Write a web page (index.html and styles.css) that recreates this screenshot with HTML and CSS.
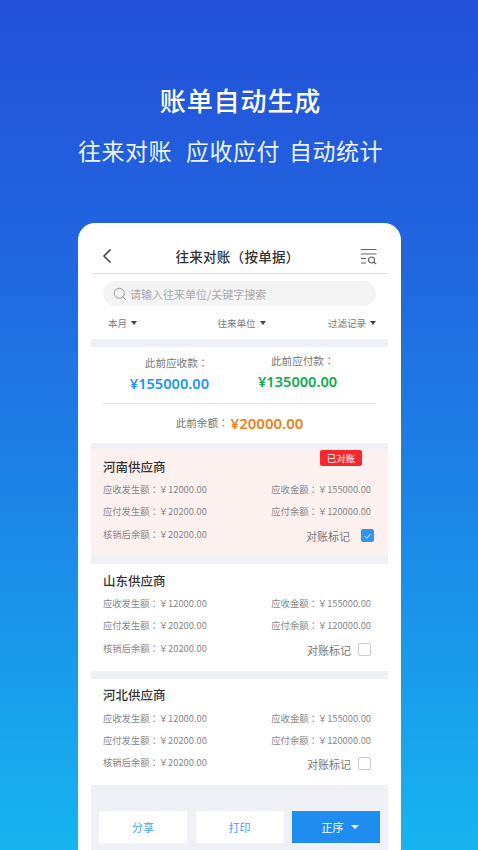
FILE: index.html
```html
<!DOCTYPE html>
<html lang="zh-CN">
<head>
<meta charset="utf-8">
<title>账单自动生成</title>
<link rel="stylesheet" href="styles.css">
</head>
<body>
<header class="hero">
  <h1 class="hero-title">账单自动生成</h1>
  <p class="hero-sub"><span>往来对账</span><span>应收应付</span><span class="hero-sub-last">自动统计</span></p>
</header>
<main class="phone">
  <div class="nav">
    <svg class="nav-back" viewBox="0 0 12 18" width="12" height="18"><path d="M9.5 2.5 3 9l6.500 6.500" fill="none" stroke="#444" stroke-width="1.600"/></svg>
    <div class="nav-title">往来对账（按单据）</div>
    <svg class="nav-filter" viewBox="0 0 18 18" width="18" height="18"><path d="M1 2.500h15.500M1 7h15.500M1 11.500h5M1 16h5" fill="none" stroke="#666" stroke-width="1.200"/><circle cx="11.500" cy="13" r="3" fill="none" stroke="#666" stroke-width="1.200"/><path d="m13.800 15.300 2.500 1.800" stroke="#666" stroke-width="1.200"/></svg>
  </div>
  <div class="search">
    <svg viewBox="0 0 14 14" width="14" height="14"><circle cx="6.300" cy="6.300" r="5" fill="none" stroke="#999" stroke-width="1"/><path d="m10 10 3 3" stroke="#999" stroke-width="1"/></svg>
    <span>请输入往来单位/关键字搜索</span>
  </div>
  <div class="filters">
    <span class="filter">本月<i class="caret"></i></span>
    <span class="filter filter-mid">往来单位<i class="caret"></i></span>
    <span class="filter">过滤记录<i class="caret"></i></span>
  </div>
  <section class="summary">
    <div class="summary-cols">
      <div class="summary-col summary-col-left">
        <div class="summary-label">此前应收款<span class="colon" lang="zh-TW">：</span></div>
        <div class="amount amount-blue">¥155000.00</div>
      </div>
      <div class="summary-col summary-col-right">
        <div class="summary-label">此前应付款<span class="colon" lang="zh-TW">：</span></div>
        <div class="amount amount-green">¥135000.00</div>
      </div>
    </div>
    <div class="balance"><span class="summary-label">此前余额<span class="colon" lang="zh-TW">：</span></span><span class="amount amount-orange">¥20000.00</span></div>
  </section>
  <section class="bill bill-done">
    <span class="badge">已对账</span>
    <h2 class="bill-name">河南供应商</h2>
    <div class="bill-row"><span>应收发生额<span class="colon" lang="zh-TW">：</span>￥12000.00</span><span class="bill-right">应收金额<span class="colon" lang="zh-TW">：</span>￥155000.00</span></div>
    <div class="bill-row"><span>应付发生额<span class="colon" lang="zh-TW">：</span>￥20200.00</span><span class="bill-right">应付余额<span class="colon" lang="zh-TW">：</span>￥120000.00</span></div>
    <div class="bill-row bill-row-last"><span>核销后余额<span class="colon" lang="zh-TW">：</span>￥20200.00</span><span class="mark mark-on">对账标记<i class="check check-on"><svg viewBox="0 0 12 12" width="12" height="12"><path d="m3 6.200 2.200 2.200L9.200 4" fill="none" stroke="#fff" stroke-width="1"/></svg></i></span></div>
  </section>
  <section class="bill">
    <h2 class="bill-name">山东供应商</h2>
    <div class="bill-row"><span>应收发生额<span class="colon" lang="zh-TW">：</span>￥12000.00</span><span class="bill-right">应收金额<span class="colon" lang="zh-TW">：</span>￥155000.00</span></div>
    <div class="bill-row"><span>应付发生额<span class="colon" lang="zh-TW">：</span>￥20200.00</span><span class="bill-right">应付余额<span class="colon" lang="zh-TW">：</span>￥120000.00</span></div>
    <div class="bill-row bill-row-last"><span>核销后余额<span class="colon" lang="zh-TW">：</span>￥20200.00</span><span class="mark">对账标记<i class="check"></i></span></div>
  </section>
  <section class="bill bill-third">
    <h2 class="bill-name">河北供应商</h2>
    <div class="bill-row"><span>应收发生额<span class="colon" lang="zh-TW">：</span>￥12000.00</span><span class="bill-right">应收金额<span class="colon" lang="zh-TW">：</span>￥155000.00</span></div>
    <div class="bill-row"><span>应付发生额<span class="colon" lang="zh-TW">：</span>￥20200.00</span><span class="bill-right">应付余额<span class="colon" lang="zh-TW">：</span>￥120000.00</span></div>
    <div class="bill-row bill-row-last"><span>核销后余额<span class="colon" lang="zh-TW">：</span>￥20200.00</span><span class="mark">对账标记<i class="check"></i></span></div>
  </section>
  <div class="actions">
    <button class="btn">分享</button>
    <button class="btn">打印</button>
    <button class="btn btn-primary">正序<i class="caret caret-white"></i></button>
  </div>
</main>
</body>
</html>
```
FILE: styles.css
```css
* { box-sizing: border-box; }
html, body { margin: 0; height: 850px; overflow: hidden; }
body {
  background: linear-gradient(180deg, #2350d8 0%, #2166e0 30%, #1b8ce8 65%, #17b4ef 100%);
  font-family: "Noto Sans CJK SC", "Noto Sans", sans-serif;
}
.colon { font-family: "Noto Sans CJK TC", sans-serif; }
.hero { height: 223px; padding-top: 82px; text-align: center; color: #fff; }
.hero-title { margin: 0; padding-left: 3px; font-size: 26px; line-height: 36px; font-weight: 500; letter-spacing: 0.9px; }
.hero-sub {
  margin: 16px 0 0; padding-right: 17px; font-size: 23px; line-height: 32px; font-weight: 400; letter-spacing: 0.5px; color: #eef4ff;
  display: flex; justify-content: center; gap: 14px;
}
.hero-sub-last { margin-left: -5px; }
.phone {
  width: 323px; height: 627px; margin-left: 78px; padding: 0 13px;
  background: #fff; border-radius: 17px 17px 0 0; overflow: hidden;
}
.nav { height: 51px; padding: 16px 10px 0 10px; border-bottom: 1px solid #e2e2e4; display: flex; justify-content: space-between; align-items: center; }
.nav-title { margin-left: 2px; font-size: 13.500px; font-weight: 500; color: #333; letter-spacing: 0.3px; }
.nav-back { margin-top: -1px; }
.search {
  margin: 7px 12px 0; height: 25px; padding-left: 10px; border-radius: 13px;
  background: #f4f4f5; display: flex; align-items: center; gap: 3px;
  font-size: 11px; color: #aaa;
}
.filters { height: 33px; padding: 0 12px 0 17px; display: flex; justify-content: space-between; align-items: center; font-size: 9.500px; color: #777; }
.filter { display: inline-flex; align-items: center; gap: 4px; }
.filter-mid { margin-left: 18px; }
.caret { width: 0; height: 0; border: 3.500px solid transparent; border-top: 4px solid #444; border-bottom: 0; }
.caret-white { border-top-color: #fff; border-width: 4px 4px 0; }
.summary { border-top: 8px solid #eff1f6; border-bottom: 7px solid #eff1f6; height: 111px; }
.summary-cols { display: flex; justify-content: center; gap: 49px; height: 57px; margin: 0 12px; border-bottom: 1px solid #e6e6e8; padding-right: 12px; }
.summary-col { padding-top: 7px; }
.summary-col-left { padding-top: 9px; }
.summary-col-left .summary-label { padding-left: 15px; }
.summary-col-right .summary-label { padding-left: 13px; }
.summary-label { font-size: 10.600px; line-height: 14px; color: #777; }
.amount { font-size: 14.600px; line-height: 20px; font-weight: 600; font-family: "Noto Sans", sans-serif; }
.amount-blue { color: #2196f3; margin-top: 3px; }
.amount-green { color: #0fad4f; margin-top: 3px; }
.amount-orange { color: #f08019; margin-left: 2px; font-size: 15px; }
.balance { display: flex; justify-content: center; align-items: center; height: 38px; }
.bill { position: relative; height: 107px; padding: 8px 12px 0; }
.bill + .bill { height: 115px; border-top: 8px solid #eff1f6; }
.bill-done { background: #fdf1f0; height: 106px; }
.bill + .bill-third { height: 114px; padding-top: 7px; }
.bill-name { margin: 0 0 2px; font-size: 12.500px; line-height: 18px; font-weight: 500; color: #333; }
.bill-third .bill-name { margin-bottom: 3px; }
.bill-row { display: flex; justify-content: space-between; align-items: center; height: 22px; font-size: 9.300px; color: #888; }
.bill-row-last { margin-top: 1px; }
.bill-third .bill-row-last { margin-top: 0; }
.bill-right { margin-right: 5px; }
.mark { display: inline-flex; align-items: center; gap: 7px; margin-right: 5px; padding-top: 3px; font-size: 11px; color: #777; }
.mark-on { gap: 11px; margin-right: 2px; }
.check { width: 13px; height: 13px; border: 1px solid #ccc; border-radius: 2px; display: inline-flex; align-items: center; justify-content: center; background: #fff; }
.check-on { background: #2d96ee; border-color: #2d96ee; }
.badge {
  position: absolute; right: 26px; top: 0; width: 42px; height: 16px;
  background: #f9262e; color: #fff; border-radius: 2px; text-align: center;
  font-size: 9.500px; line-height: 16px;
}
.actions { background: #eff1f6; height: 65px; padding: 26px 8px 0; display: flex; gap: 8.500px; }
.btn {
  flex: none; width: 88px; height: 32px; border: 0; background: #fff; color: #4aa0ec; font: inherit; font-size: 11px; padding: 0;
  display: inline-flex; align-items: center; justify-content: center; gap: 7px;
}
.btn-primary { background: #1f8cf0; color: #fff; padding-left: 8px; }
```
